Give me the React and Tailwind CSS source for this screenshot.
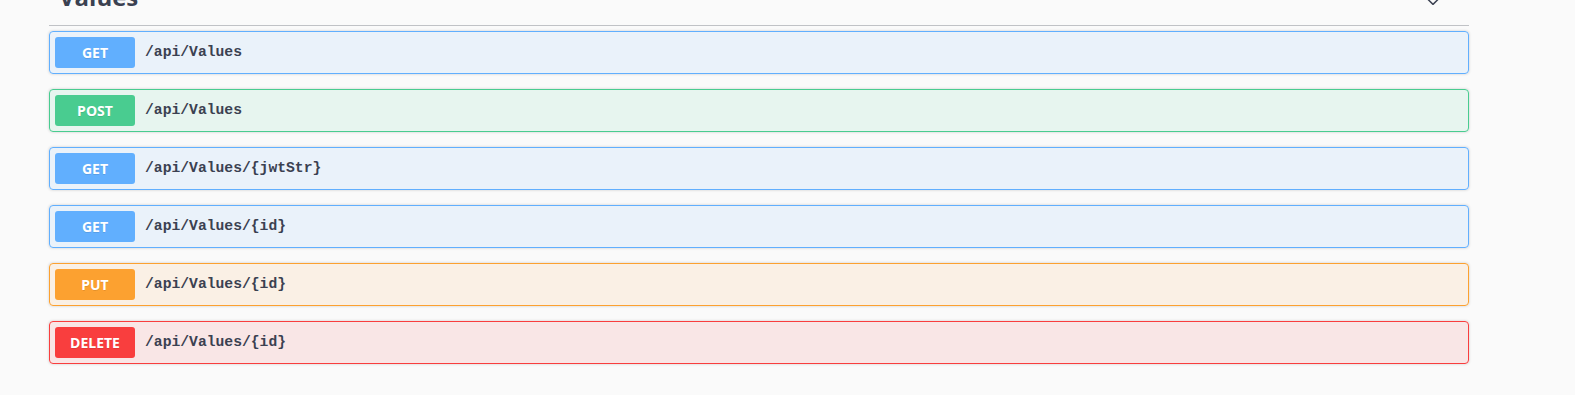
import React from "react";

const ops = [
  { method: "GET", path: "/api/Values" },
  { method: "POST", path: "/api/Values" },
  { method: "GET", path: "/api/Values/{jwtStr}" },
  { method: "GET", path: "/api/Values/{id}" },
  { method: "PUT", path: "/api/Values/{id}" },
  { method: "DELETE", path: "/api/Values/{id}" },
];

// colours per http method
const styles = {
  GET: { box: "border-[#61affe] bg-[#61affe]/10", badge: "bg-[#61affe]" },
  POST: { box: "border-[#49cc90] bg-[#49cc90]/10", badge: "bg-[#49cc90]" },
  PUT: { box: "border-[#fca130] bg-[#fca130]/10", badge: "bg-[#fca130]" },
  DELETE: { box: "border-[#f93e3e] bg-[#f93e3e]/10", badge: "bg-[#f93e3e]" },
};

const Chevron = () => (
  <svg width="20" height="20" viewBox="0 0 20 20" className="mt-[6px] fill-[#3b4151]">
    <path d="M17.418 6.109c.272-.268.709-.268.979 0s.271.701 0 .969l-7.908 7.83c-.27.268-.707.268-.979 0l-7.908-7.83c-.27-.268-.27-.701 0-.969.271-.268.709-.268.979 0L10 13.25l7.418-7.141z" />
  </svg>
);

const Operation = ({ method, path }) => {
  const s = styles[method];
  return (
    <div className={`mb-[15px] rounded border shadow-[0_0_3px_rgba(0,0,0,0.19)] ${s.box}`}>
      <div className="flex items-center p-[5px]">
        <span
          className={`flex h-[31px] min-w-[80px] items-center justify-center rounded-[3px] px-[15px] font-['Open_Sans',sans-serif] text-[14px] font-bold text-white [text-shadow:0_1px_0_rgba(0,0,0,0.1)] ${s.badge}`}
        >
          {method}
        </span>
        <span className="px-[10px] font-['Liberation_Mono',monospace] text-[14.7px] font-bold text-[#3b4151]">
          {path}
        </span>
      </div>
    </div>
  );
};

export default function App() {
  return (
    <div className="h-[395px] overflow-hidden bg-[#fafafa]">
      <div className="ml-[49px] mt-[-31px] w-[1420px]">
        {/* tag header */}
        <div className="mb-[5px] flex items-center border-b border-[#3b4151]/30 py-[10px] pl-[10px] pr-[26px]">
          <h4 className="flex-1 font-['Open_Sans',sans-serif] text-[24px] font-bold text-[#3b4151]">
            Values
          </h4>
          <Chevron />
        </div>

        {ops.map((op, i) => (
          <Operation key={i} {...op} />
        ))}
      </div>
    </div>
  );
}
